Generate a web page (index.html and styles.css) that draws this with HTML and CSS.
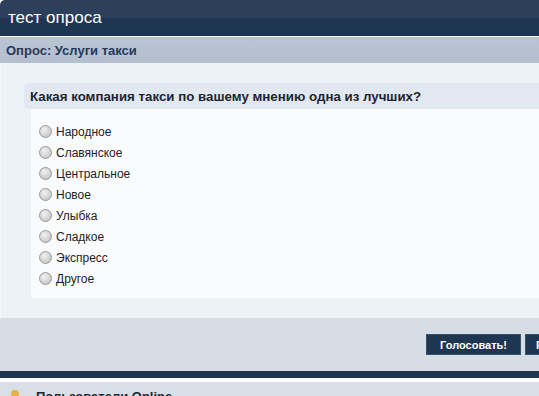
FILE: index.html
```html
<!DOCTYPE html>
<html>
<head>
<meta charset="utf-8">
<link rel="stylesheet" href="styles.css">
</head>
<body>
<div class="page">
  <div class="header"><span class="title">тест опроса</span></div>
  <div class="subheader">Опрос: Услуги такси</div>
  <div class="content">
    <div class="question">Какая компания такси по вашему мнению одна из лучших?</div>
    <div class="options">
      <label class="opt"><span class="radio"></span>Народное</label>
      <label class="opt"><span class="radio"></span>Славянское</label>
      <label class="opt"><span class="radio"></span>Центральное</label>
      <label class="opt"><span class="radio"></span>Новое</label>
      <label class="opt"><span class="radio"></span>Улыбка</label>
      <label class="opt"><span class="radio"></span>Сладкое</label>
      <label class="opt"><span class="radio"></span>Экспресс</label>
      <label class="opt"><span class="radio"></span>Другое</label>
    </div>
  </div>
  <div class="footer">
    <button class="btn btn-vote">Голосовать!</button>
    <button class="btn">Результаты</button>
  </div>
  <div class="darkbar"></div>
  <div class="next">
    <span class="bulb"></span>
    <span class="next-title">Пользователи Online</span>
  </div>
</div>
</body>
</html>
```
FILE: styles.css
```css
html, body {
  margin: 0;
  padding: 0;
  background: #ffffff;
  overflow: hidden;
}
.page {
  width: 640px;
  font-family: "Liberation Sans", Arial, sans-serif;
}
.header {
  height: 36px;
  background: linear-gradient(to bottom, #2c405b 0, #2c405b 18px, #1f3653 18px, #1f3653 36px);
  border-top-left-radius: 5px;
  display: flex;
  align-items: center;
  padding-left: 8px;
}
.title {
  color: #ffffff;
  font-size: 17px;
}
.subheader {
  margin-top: 1px;
  height: 26px;
  background: linear-gradient(to bottom, #b9c5d3, #b3bfce);
  color: #26395a;
  font-weight: bold;
  font-size: 13px;
  display: flex;
  align-items: center;
  padding-left: 6px;
}
.content {
  background: #edf2f7;
  border-left: 1px solid #f6f8fb;
  padding: 20px 0 20px 23px;
}
.question {
  background: #e1e8f0;
  height: 26px;
  border-radius: 5px 0 0 5px;
  display: flex;
  align-items: center;
  padding-left: 6px;
  font-weight: bold;
  font-size: 13.3px;
  color: #1f2530;
}
.options {
  margin-left: 7px;
  background: #f9fbfd;
  padding: 12px 0 9px 8px;
  display: flex;
  flex-direction: column;
}
.opt {
  height: 21px;
  display: flex;
  align-items: center;
  font-size: 12px;
  color: #1e1e1e;
}
.radio {
  width: 11px;
  height: 11px;
  border-radius: 50%;
  border: 1px solid #9a9a9a;
  background: radial-gradient(circle at 40% 35%, #f2f2f2 0, #d6d6d6 50%, #bdbdbd 100%);
  margin-right: 4px;
  flex: none;
}
.footer {
  background: #d6dde5;
  height: 53px;
  display: flex;
  align-items: center;
  padding-left: 426px;
  gap: 4px;
}
.btn {
  flex: none;
  background: #1f3653;
  color: #ffffff;
  border: 1px solid #3a5272;
  font-family: "Liberation Sans", Arial, sans-serif;
  font-weight: bold;
  font-size: 11px;
  height: 21px;
  padding: 0 10px;
  white-space: nowrap;
}
.btn-vote {
  width: 95px;
  padding: 0;
}
.darkbar {
  height: 7px;
  background: #1f3653;
}
.next {
  margin-top: 4px;
  background: #d8dfe7;
  height: 40px;
  display: flex;
  align-items: flex-start;
  padding-left: 11px;
  padding-top: 7px;
}
.bulb {
  width: 8px;
  height: 8px;
  border-radius: 50%;
  background: #e6b43a;
  margin-top: 1px;
}
.next-title {
  margin-left: 17px;
  font-weight: bold;
  font-size: 13px;
  color: #1f2530;
}
```
